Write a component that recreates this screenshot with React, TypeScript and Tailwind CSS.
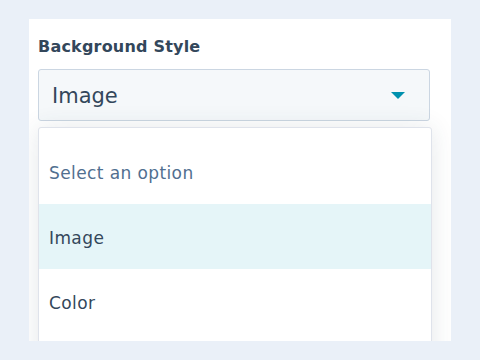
import React from 'react';

const options = ['Select an option', 'Image', 'Color'];

const App: React.FC = () => {
  const selected = 'Image';
  return (
    <div className="w-[480px] h-[360px] bg-[#eaf0f8] pt-[19px] pl-[29px] font-['DejaVu_Sans',sans-serif]">
      <div className="w-[422px] h-[322px] bg-white overflow-hidden pl-[9px] pt-[17px]">
        <label className="block text-[16px] font-bold text-[#33475b] leading-[22px] tracking-[0.2px]">Background Style</label>
        <div className="mt-[11px] w-[392px] h-[52px] rounded-[3px] border border-[#cbd6e2] bg-[#f5f8fa] flex items-center justify-between pl-[13px] pr-[24px]">
          <span className="text-[21px] text-[#33475b] leading-none pt-[2px]">{selected}</span>
          <svg width="14" height="7" viewBox="0 0 14 7">
            <path d="M0 0 H14 L7 7 Z" fill="#0091ae" />
          </svg>
        </div>
        <div className="mt-[6px] w-[394px] h-[240px] rounded-[3px] border border-[#dfe3eb] bg-white shadow-[0_1px_24px_rgba(45,62,80,0.12)] pt-[11px]">
          {options.map((o) => (
            <div
              key={o}
              className={`h-[65px] flex items-center pl-[10px] pt-[4px] text-[17px] tracking-[0.4px] ${
                o === selected ? 'bg-[#e5f5f8] text-[#33475b]' : o === 'Select an option' ? 'text-[#516f90]' : 'text-[#33475b]'
              }`}
            >
              {o}
            </div>
          ))}
        </div>
      </div>
    </div>
  );
};

export default App;
